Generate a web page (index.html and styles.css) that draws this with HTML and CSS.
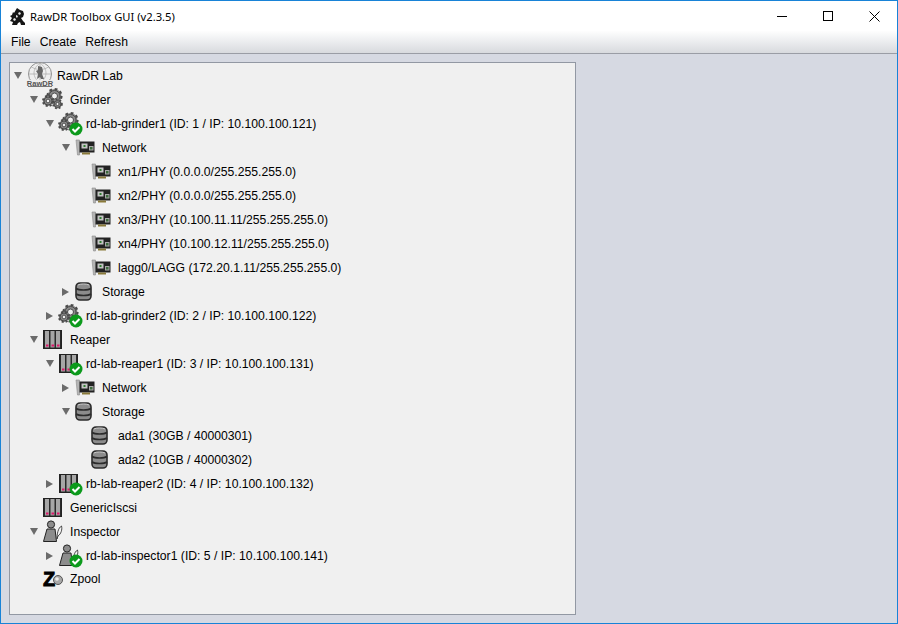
FILE: index.html
```html
<!DOCTYPE html>
<html lang="en">
<head>
    <meta charset="UTF-8">
    <meta name="viewport" content="width=device-width, initial-scale=1.0">
    <title>RawDR Toolbox GUI (v2.3.5)</title>
    <link rel="stylesheet" href="styles.css">
</head>
<body>
    <!-- shared icons -->
    <svg class="defs" width="0" height="0">
        <defs>
            <symbol id="gears" viewBox="0 0 28 24" overflow="visible">
                <g fill="#8a8a8a" stroke="#4a4a4a">
                    <circle cx="12.500" cy="9" r="7" stroke-width="2.200" stroke-dasharray="2.700 2.800"/>
                    <circle cx="12.500" cy="9" r="5.500" stroke-width="1"/>
                    <circle cx="12.500" cy="9" r="3" fill="#f0f0f0" stroke-width="1"/>
                    <circle cx="6" cy="14" r="5" stroke-width="2" stroke-dasharray="2 2"/>
                    <circle cx="6" cy="14" r="4" stroke-width="1"/>
                    <circle cx="6" cy="14" r="1.900" fill="#f0f0f0" stroke-width="1"/>
                    <circle cx="15.500" cy="17" r="4.400" stroke-width="1.800" stroke-dasharray="1.800 1.900"/>
                    <circle cx="15.500" cy="17" r="3.400" stroke-width="1"/>
                    <circle cx="15.500" cy="17" r="1.600" fill="#f0f0f0" stroke-width="1"/>
                </g>
            </symbol>
            <symbol id="nic" viewBox="0 0 28 24">
                <path d="M2 5h3.500v15H3.500z" fill="#b4b4b4" stroke="#8a8a8a" stroke-width=".6"/>
                <rect x="5.500" y="6.500" width="15" height="11" fill="#222"/>
                <rect x="7.500" y="8.500" width="6" height="5" fill="#c4c4c4"/>
                <rect x="9.500" y="10" width="2" height="2" fill="#2f7d2f"/>
                <rect x="15" y="11" width="4.500" height="4.500" fill="#a8a8a8"/>
                <rect x="16" y="12" width="2.500" height="2.500" fill="#3c6b3c"/>
                <rect x="8" y="17.500" width="8" height="2" fill="#8a7a3a"/>
            </symbol>
            <symbol id="disk" viewBox="0 0 28 24">
                <rect x="2" y="4" width="15" height="17" rx="4" fill="#8c8c8c" stroke="#2b2b2b" stroke-width="1.600"/>
                <path d="M2 9.500c3 2 12 2 15 0M2 15c3 2 12 2 15 0" fill="none" stroke="#2b2b2b" stroke-width="1.600"/>
                <path d="M4 6c3-1.400 8-1.400 11 0" fill="none" stroke="#c8c8c8" stroke-width="1"/>
            </symbol>
            <symbol id="server" viewBox="0 0 28 24">
                <rect x="1.500" y="3.500" width="18" height="18" fill="#2a2a2a" stroke="#222"/>
                <rect x="3" y="4" width="4" height="16.500" fill="#a6a6a6"/>
                <rect x="8.500" y="4" width="4" height="16.500" fill="#a6a6a6"/>
                <rect x="14" y="4" width="4" height="16.500" fill="#a6a6a6"/>
                <rect x="4" y="17.500" width="2.500" height="2" fill="#e0186c"/>
                <rect x="9.500" y="17.500" width="2.500" height="2" fill="#e0186c"/>
                <rect x="15" y="17.500" width="2.500" height="2" fill="#e0186c"/>
            </symbol>
            <symbol id="inspector" viewBox="0 0 28 24">
                <circle cx="9" cy="5.500" r="3.600" fill="#8c8c8c" stroke="#222"/>
                <path d="M5 10h8l1.500 12.500H1.500z" fill="#8c8c8c" stroke="#222"/>
                <path d="M15 20c0-5 1-11 4.500-13 1 3.500-.5 8-3.500 10z" fill="#f4f4f4" stroke="#333" stroke-width=".9"/>
            </symbol>
            <symbol id="ok" viewBox="0 0 14 14">
                <circle cx="7" cy="7" r="6.500" fill="#0c9a1c"/>
                <path d="M3.500 7l2.500 2.500 4.500-4.500" fill="none" stroke="#fff" stroke-width="2"/>
            </symbol>
        </defs>
    </svg>

    <div class="window">
        <header class="titlebar">
            <svg class="app-icon" width="16" height="17" viewBox="0 0 16 17">
                <path d="M7 0l3 2 3 1 1 3-1 3-2 1 2 3 2 2v2h-4l-1-3-2 1-1 2H2l1-3-3-1 2-3-2-2 2-1 1-3 1 1z" fill="#161616"/>
                <path d="M9 4l2 1-1 2-2-1zM3 11l2-1 1 2-2 1zM6 7l2 1-1 2-1-1z" fill="#e8e8e8"/>
            </svg>
            <span class="title">RawDR Toolbox GUI (v2.3.5)</span>
            <div class="controls">
                <span class="ctl"><svg width="10" height="10" viewBox="0 0 10 10"><path d="M0 5.500h10" stroke="#000"/></svg></span>
                <span class="ctl"><svg width="10" height="10" viewBox="0 0 10 10"><rect x=".5" y=".5" width="9" height="9" fill="none" stroke="#000"/></svg></span>
                <span class="ctl"><svg width="11" height="11" viewBox="0 0 11 11"><path d="M.5.500l10 10M10.500.5l-10 10" stroke="#000"/></svg></span>
            </div>
        </header>

        <nav class="menubar">
            <span class="menu">File</span>
            <span class="menu">Create</span>
            <span class="menu">Refresh</span>
        </nav>

        <main class="desktop">
            <div class="tree">
                <div class="row lvl0">
                    <span class="arrow down"></span>
                    <svg class="icon root" width="31" height="24" viewBox="0 0 31 24">
                        <circle cx="14" cy="11" r="11.500" fill="#eee" stroke="#8f8f8f"/>
                        <path d="M2.500 11h23M14 0v18M5 3.500c5 4 13 4 18 0M14 0c-8 6-8 14 0 20M14 0c8 6 8 14 0 20" fill="none" stroke="#a8a8a8" stroke-width=".7"/>
                        <path d="M12 3l4 1 1 4-1 3 2 5h-3l-1-2-3 2 1-5-2-3 2-1z" fill="#666"/>
                        <rect x="1" y="17" width="26" height="7" fill="#eee"/>
                        <text class="logo-text" x="14" y="22.500" text-anchor="middle">RawDR</text>
                        <path d="M2 23.500h24" stroke="#777"/>
                    </svg>
                    <span class="label">RawDR Lab</span>
                </div>

                <div class="row lvl1">
                    <span class="arrow down"></span>
                    <svg class="icon" width="28" height="24"><use href="#gears" width="28" height="24"/></svg>
                    <span class="label">Grinder</span>
                </div>
                <div class="row lvl2">
                    <span class="arrow down"></span>
                    <svg class="icon" width="28" height="24"><use href="#gears" width="28" height="24"/><use href="#ok" x="11" y="11" width="14" height="14"/></svg>
                    <span class="label">rd-lab-grinder1 (ID: 1 / IP: 10.100.100.121)</span>
                </div>
                <div class="row lvl3">
                    <span class="arrow down"></span>
                    <svg class="icon" width="28" height="24"><use href="#nic" width="28" height="24"/></svg>
                    <span class="label">Network</span>
                </div>
                <div class="row lvl4">
                    <span class="arrow"></span>
                    <svg class="icon" width="28" height="24"><use href="#nic" width="28" height="24"/></svg>
                    <span class="label">xn1/PHY (0.0.0.0/255.255.255.0)</span>
                </div>
                <div class="row lvl4">
                    <span class="arrow"></span>
                    <svg class="icon" width="28" height="24"><use href="#nic" width="28" height="24"/></svg>
                    <span class="label">xn2/PHY (0.0.0.0/255.255.255.0)</span>
                </div>
                <div class="row lvl4">
                    <span class="arrow"></span>
                    <svg class="icon" width="28" height="24"><use href="#nic" width="28" height="24"/></svg>
                    <span class="label">xn3/PHY (10.100.11.11/255.255.255.0)</span>
                </div>
                <div class="row lvl4">
                    <span class="arrow"></span>
                    <svg class="icon" width="28" height="24"><use href="#nic" width="28" height="24"/></svg>
                    <span class="label">xn4/PHY (10.100.12.11/255.255.255.0)</span>
                </div>
                <div class="row lvl4">
                    <span class="arrow"></span>
                    <svg class="icon" width="28" height="24"><use href="#nic" width="28" height="24"/></svg>
                    <span class="label">lagg0/LAGG (172.20.1.11/255.255.255.0)</span>
                </div>
                <div class="row lvl3">
                    <span class="arrow right"></span>
                    <svg class="icon" width="28" height="24"><use href="#disk" width="28" height="24"/></svg>
                    <span class="label">Storage</span>
                </div>
                <div class="row lvl2">
                    <span class="arrow right"></span>
                    <svg class="icon" width="28" height="24"><use href="#gears" width="28" height="24"/><use href="#ok" x="11" y="11" width="14" height="14"/></svg>
                    <span class="label">rd-lab-grinder2 (ID: 2 / IP: 10.100.100.122)</span>
                </div>

                <div class="row lvl1">
                    <span class="arrow down"></span>
                    <svg class="icon" width="28" height="24"><use href="#server" width="28" height="24"/></svg>
                    <span class="label">Reaper</span>
                </div>
                <div class="row lvl2">
                    <span class="arrow down"></span>
                    <svg class="icon" width="28" height="24"><use href="#server" width="28" height="24"/><use href="#ok" x="11" y="11" width="14" height="14"/></svg>
                    <span class="label">rd-lab-reaper1 (ID: 3 / IP: 10.100.100.131)</span>
                </div>
                <div class="row lvl3">
                    <span class="arrow right"></span>
                    <svg class="icon" width="28" height="24"><use href="#nic" width="28" height="24"/></svg>
                    <span class="label">Network</span>
                </div>
                <div class="row lvl3">
                    <span class="arrow down"></span>
                    <svg class="icon" width="28" height="24"><use href="#disk" width="28" height="24"/></svg>
                    <span class="label">Storage</span>
                </div>
                <div class="row lvl4">
                    <span class="arrow"></span>
                    <svg class="icon" width="28" height="24"><use href="#disk" width="28" height="24"/></svg>
                    <span class="label">ada1 (30GB / 40000301)</span>
                </div>
                <div class="row lvl4">
                    <span class="arrow"></span>
                    <svg class="icon" width="28" height="24"><use href="#disk" width="28" height="24"/></svg>
                    <span class="label">ada2 (10GB / 40000302)</span>
                </div>
                <div class="row lvl2">
                    <span class="arrow right"></span>
                    <svg class="icon" width="28" height="24"><use href="#server" width="28" height="24"/><use href="#ok" x="11" y="11" width="14" height="14"/></svg>
                    <span class="label">rb-lab-reaper2 (ID: 4 / IP: 10.100.100.132)</span>
                </div>

                <div class="row lvl1">
                    <span class="arrow"></span>
                    <svg class="icon" width="28" height="24"><use href="#server" width="28" height="24"/></svg>
                    <span class="label">GenericIscsi</span>
                </div>

                <div class="row lvl1">
                    <span class="arrow down"></span>
                    <svg class="icon" width="28" height="24"><use href="#inspector" width="28" height="24"/></svg>
                    <span class="label">Inspector</span>
                </div>
                <div class="row lvl2">
                    <span class="arrow right"></span>
                    <svg class="icon" width="28" height="24"><use href="#inspector" width="28" height="24"/><use href="#ok" x="11" y="11" width="14" height="14"/></svg>
                    <span class="label">rd-lab-inspector1 (ID: 5 / IP: 10.100.100.141)</span>
                </div>

                <div class="row lvl1">
                    <span class="arrow"></span>
                    <svg class="icon" width="28" height="24">
                        <text class="zpool-z" x="1" y="19">Z</text>
                        <circle cx="16" cy="13" r="4.500" fill="#a8a8a8" stroke="#555"/>
                        <circle cx="15" cy="12" r="1.800" fill="#eee"/>
                    </svg>
                    <span class="label label-last">Zpool</span>
                </div>
            </div>
        </main>
    </div>
</body>
</html>
```

FILE: styles.css
```css
html, body {
    margin: 0;
    padding: 0;
}
body {
    font-family: "Liberation Sans", Arial, sans-serif;
    font-size: 12.2px;
    color: #000;
    overflow: hidden;
}
.defs {
    display: block;
    height: 0;
}
.window {
    width: 898px;
    height: 624px;
    box-sizing: border-box;
    display: flex;
    flex-direction: column;
    border: 1px solid #1883d7;
    background-color: #d6d9e2;
}
.titlebar {
    height: 30px;
    flex: none;
    display: flex;
    align-items: center;
    background-color: #fff;
    padding-left: 9px;
}
.app-icon {
    flex: none;
}
.title {
    margin-left: 4px;
    font-family: "Noto Sans", sans-serif;
    font-size: 11.2px;
    color: #000;
}
.controls {
    margin-left: auto;
    display: flex;
}
.ctl {
    width: 46px;
    height: 30px;
    display: flex;
    align-items: center;
    justify-content: center;
}
.menubar {
    height: 23px;
    flex: none;
    display: flex;
    align-items: center;
    padding-left: 10px;
    box-sizing: border-box;
    gap: 9px;
    background: linear-gradient(#fefefe, #f4f5f6 25%, #d8dade);
    border-bottom: 1px solid #9a9da5;
}
.desktop {
    flex: 1;
    min-height: 0;
    padding: 8px 321px 8px 8px;
}
.tree {
    height: 100%;
    box-sizing: border-box;
    border: 1px solid #9298a3;
    background-color: #f0f0f0;
}
.row {
    height: 24px;
    display: flex;
    align-items: center;
}
.lvl0 { padding-left: 0; }
.lvl1 { padding-left: 16px; }
.lvl2 { padding-left: 32px; }
.lvl3 { padding-left: 48px; }
.lvl4 { padding-left: 64px; }
.arrow {
    width: 16px;
    height: 24px;
    flex: none;
    position: relative;
}
.arrow.down::before {
    content: "";
    position: absolute;
    left: 4px;
    top: 9px;
    border-left: 4px solid transparent;
    border-right: 4px solid transparent;
    border-top: 7px solid #6b6b6b;
}
.arrow.right::before {
    content: "";
    position: absolute;
    left: 4px;
    top: 9px;
    border-top: 4px solid transparent;
    border-bottom: 4px solid transparent;
    border-left: 7px solid #6b6b6b;
}
.icon {
    flex: none;
    overflow: visible;
}
.logo-text {
    font-family: "Liberation Sans", sans-serif;
    font-size: 7.5px;
    font-weight: bold;
    fill: #555;
}
.zpool-z {
    font-family: "Liberation Sans", sans-serif;
    font-size: 20px;
    font-weight: bold;
    fill: #000;
    stroke: #000;
    stroke-width: .8px;
}
.label {
    white-space: nowrap;
    padding-top: 2px;
}
.label-last {
    padding-top: 0;
}
```
